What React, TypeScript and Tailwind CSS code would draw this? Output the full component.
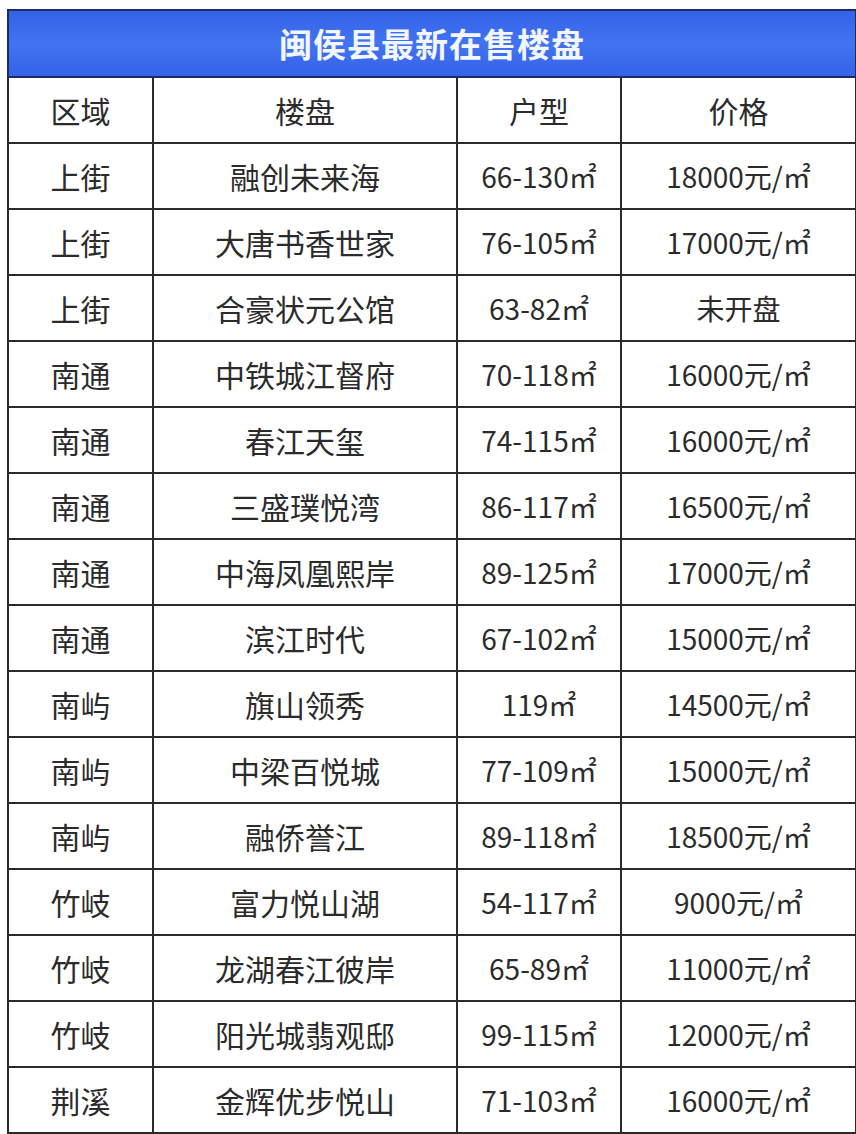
const rows: [string, string, string, string][] = [
  ['上街', '融创未来海', '66-130㎡', '18000元/㎡'],
  ['上街', '大唐书香世家', '76-105㎡', '17000元/㎡'],
  ['上街', '合豪状元公馆', '63-82㎡', '未开盘'],
  ['南通', '中铁城江督府', '70-118㎡', '16000元/㎡'],
  ['南通', '春江天玺', '74-115㎡', '16000元/㎡'],
  ['南通', '三盛璞悦湾', '86-117㎡', '16500元/㎡'],
  ['南通', '中海凤凰熙岸', '89-125㎡', '17000元/㎡'],
  ['南通', '滨江时代', '67-102㎡', '15000元/㎡'],
  ['南屿', '旗山领秀', '119㎡', '14500元/㎡'],
  ['南屿', '中梁百悦城', '77-109㎡', '15000元/㎡'],
  ['南屿', '融侨誉江', '89-118㎡', '18500元/㎡'],
  ['竹岐', '富力悦山湖', '54-117㎡', '9000元/㎡'],
  ['竹岐', '龙湖春江彼岸', '65-89㎡', '11000元/㎡'],
  ['竹岐', '阳光城翡观邸', '99-115㎡', '12000元/㎡'],
  ['荆溪', '金辉优步悦山', '71-103㎡', '16000元/㎡'],
];

const cell = 'h-[66px] border-2 border-[#2a2a2a] text-center align-middle p-0';

export default function App() {
  return (
    <div
      className="w-[856px] h-[1134px] bg-white pl-[7px] pt-[9px] text-[#2b2b2b] text-[30px] leading-none"
      style={{ fontFamily: '"Noto Sans CJK SC", "Noto Sans", sans-serif' }}
    >
      <table className="w-[848px] border-collapse table-fixed">
        <colgroup>
          <col className="w-[145px]" />
          <col className="w-[304px]" />
          <col className="w-[164px]" />
          <col className="w-[235px]" />
        </colgroup>
        <thead>
          <tr>
            <th
              colSpan={4}
              className="h-[67px] border-2 border-[#1c2a6a] bg-gradient-to-b from-[#3563e6] via-[#4173f2] to-[#3563e6] text-[#f2f6ff] text-[33px] font-bold tracking-[1px]"
            >
              闽侯县最新在售楼盘
            </th>
          </tr>
          <tr>
            <th className={`${cell} font-normal`}>区域</th>
            <th className={`${cell} font-normal`}>楼盘</th>
            <th className={`${cell} font-normal`}>户型</th>
            <th className={`${cell} font-normal`}>价格</th>
          </tr>
        </thead>
        <tbody>
          {rows.map((r, i) => (
            <tr key={i}>
              <td className={cell}>{r[0]}</td>
              <td className={cell}>{r[1]}</td>
              <td className={`${cell} text-[28px]`}>{r[2]}</td>
              <td className={`${cell} text-[28px]`}>{r[3]}</td>
            </tr>
          ))}
        </tbody>
      </table>
    </div>
  );
}
